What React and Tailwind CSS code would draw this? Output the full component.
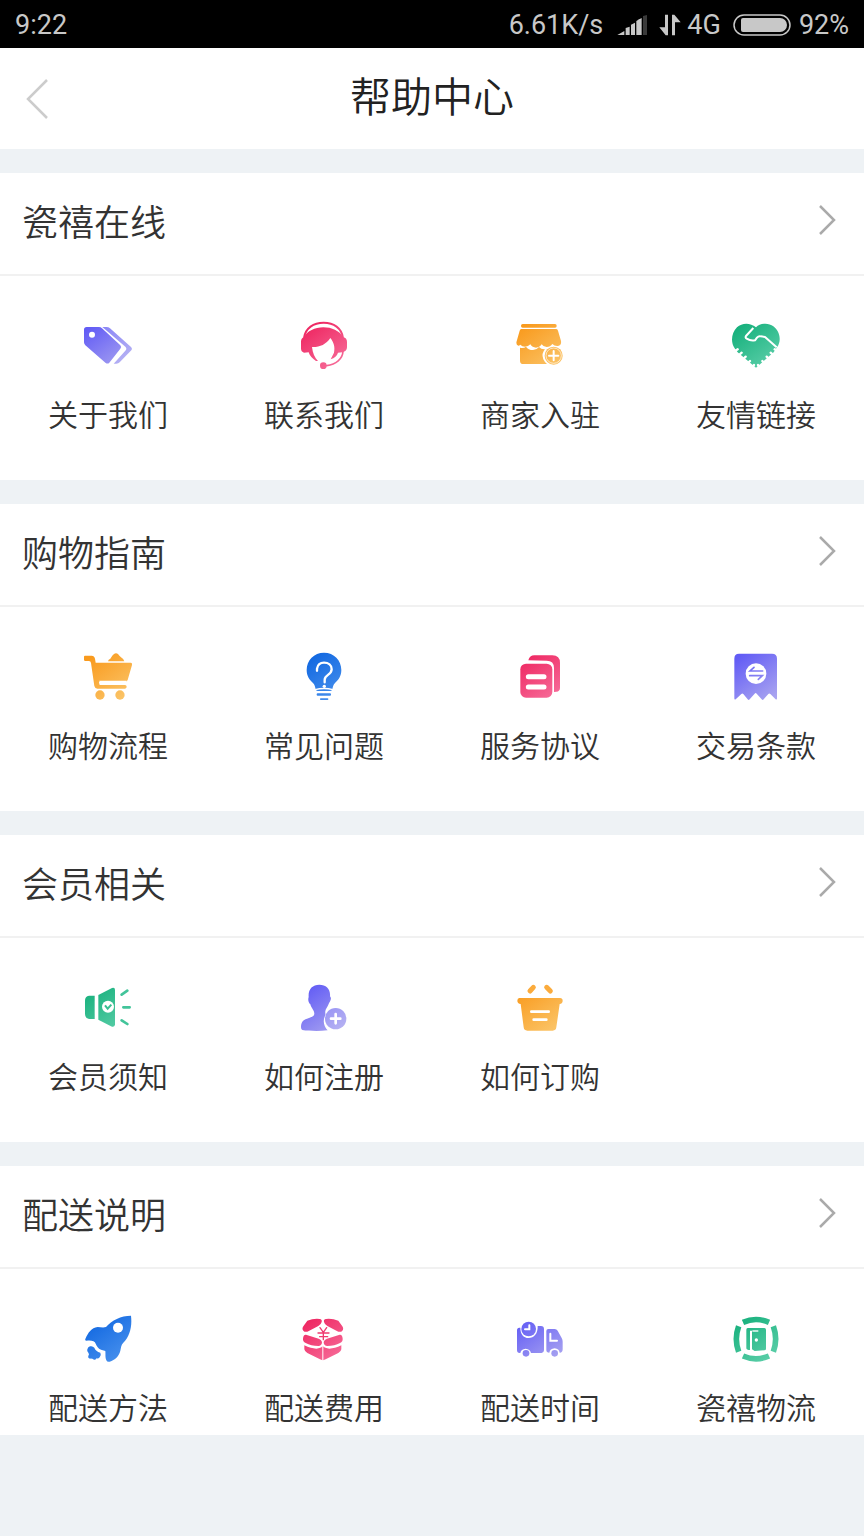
const GRADIENTS = {
  purple: ['#625cf5', '#aaa5f0'],
  red: ['#ee2560', '#f7709c'],
  orange: ['#f99a1d', '#fbc569'],
  green: ['#16b07c', '#5fd0ab'],
  blue: ['#0f66e0', '#4b93ee'],
}

function Glyph({ id, tone, viewBox, children }) {
  const [from, to] = GRADIENTS[tone]
  const [x, y, w, h] = viewBox.split(' ').map(Number)

  return (
    <svg className="size-12" viewBox={viewBox} fill={`url(#${id})`} aria-hidden="true">
      <defs>
        <linearGradient id={id} gradientUnits="userSpaceOnUse" x1={x + 24} y1={y + 12} x2={x + w - 24} y2={y + h}>
          <stop offset="0" stopColor={from} />
          <stop offset="1" stopColor={to} />
        </linearGradient>
      </defs>
      {children}
    </svg>
  )
}

const TagsIcon = () => (
  <Glyph id="g-tags" tone="purple" viewBox="72 33 144 144">
    <path d="M80 51h37q5 0 9 4l55 51q5 5 0 10l-33 42q-5 5-11 1L76 106q-4-4-4-9V59q0-8 8-8z" />
    <path d="M127 51h12q7 0 11 4l63 56q5 5 1 10l-35 36q-4 4-10 4h-8l35-39q6-6 0-12z" opacity=".8" />
    <circle cx="96" cy="74" r="9" fill="#fff" />
  </Glyph>
)

const HeadsetIcon = () => (
  <Glyph id="g-headset" tone="red" viewBox="720 33 144 144">
    <path
      d="M732 84c4-30 29-46 59-46s54 16 58 46"
      fill="none"
      stroke="url(#g-headset)"
      strokeWidth="6"
    />
    <path d="M732 82q-9 2-9 13v20q0 11 9 13l14-1c3 11 11 19 22 26h6c-10-10-16-24-18-42 22 1 42-7 55-27 10 12 15 27 11 44l-10 20c12-4 19-10 22-20l13-1q14-3 14-15V96q0-12-11-14C838 62 815 52 790 52s-49 11-58 30z" />
    <path
      d="M849 124c-1 23-21 39-49 43"
      fill="none"
      stroke="url(#g-headset)"
      strokeWidth="5"
      strokeLinecap="round"
    />
    <circle cx="790" cy="167" r="10" />
  </Glyph>
)

const ShopIcon = () => (
  <Glyph id="g-shop" tone="orange" viewBox="48 33 144 144">
    <rect x="63" y="42" width="107" height="11" rx="5" />
    <path d="M64 57h105q4 0 5 5l9 31q2 13-9 15-10 1-17-6-6 9-17 9-10 0-15-8-7 10-17 10-11 0-17-10-6 7-16 7-9 0-14-6-4 4-6 3-8-3-5-13l9-32q1-5 5-5z" />
    <path d="M60 113q11 3 18-3 7 10 21 10 11 0 18-9 7 8 18 7-12 13-5 30 4 9 11 14H70q-10 0-10-10z" />
    <circle cx="161" cy="137" r="27" />
    <circle cx="161" cy="137" r="23" fill="none" stroke="#fff" strokeWidth="2" />
    <path d="M147 137h28M161 123v28" stroke="#fff" strokeWidth="6" strokeLinecap="round" />
  </Glyph>
)

const HandshakeIcon = () => (
  <Glyph id="g-handshake" tone="green" viewBox="696 33 144 144">
    <path d="M768 52c13-13 38-14 52-3 19 14 26 42 11 63l-10 15-53 46-55-46-9-12c-12-18-11-44 7-63 15-14 39-15 57 0z" />
    <path
      d="M760 54l-22 24q-3 5 2 8 12 8 25 5l6-8q5-6 11-4l13 2 35 31"
      fill="none"
      stroke="#fff"
      strokeWidth="6"
      strokeLinejoin="round"
    />
    <path
      d="M702 125l11-7M714 138l11-10M727 150l10-10M740 163l10-10M754 176l8-11M835 125l-11-7M823 138l-11-10M810 150l-10-10M797 163l-10-10M782 176l-8-11"
      stroke="#fff"
      strokeWidth="7"
      strokeLinecap="round"
    />
  </Glyph>
)

const CartIcon = () => (
  <Glyph id="g-cart" tone="orange" viewBox="72 36 144 144">
    <path d="M75 47h20q8 0 10 9l2 12h105q5 0 4 7l-13 45q-2 5-7 5l-79 1 2 9h76q5 0 5 5t-5 6h-83q-7 0-9-8L93 69q-1-6-6-6H76q-4 0-4-4V50q0-3 3-3z" />
    <path d="M144 64q1-6 7-8 6-10 11-14 6-4 12 0 4 5 9 10 8 4 10 12z" />
    <path d="M118 122h82l-2 9h-79z" fill="#fff" />
    <circle cx="120" cy="165" r="14" />
    <circle cx="180" cy="165" r="14" />
  </Glyph>
)

const BulbIcon = () => (
  <Glyph id="g-bulb" tone="blue" viewBox="720 36 144 144">
    <path d="M792 38c30 0 52 23 52 52 0 18-9 30-19 39-6 6-6 11-8 19q-1 5-6 5h-38q-5 0-6-5c-2-8-2-13-8-19-10-9-19-21-19-39 0-29 22-52 52-52z" />
    <path
      d="M771 92V86c2-11 10-18 21-18 13 0 23 8 23 20 0 17-21 16-21 31v8"
      fill="none"
      stroke="#fff"
      strokeWidth="7"
      strokeLinecap="round"
    />
    <circle cx="793" cy="139" r="5" fill="#fff" />
    <path d="M765 149q27-7 54 0" stroke="#fff" strokeWidth="4" fill="none" />
    <rect x="770" y="160" width="43" height="7" rx="3" />
    <rect x="780" y="175" width="25" height="5" rx="2" />
  </Glyph>
)

const DocumentsIcon = () => (
  <Glyph id="g-docs" tone="red" viewBox="48 36 144 144">
    <path d="M85 61q4-15 18-15h54q23 0 23 23v74q0 11-11 12l-7 1V84q0-22-22-22z" />
    <rect x="61" y="71" width="96" height="102" rx="17" />
    <path d="M85 110h47M85 141h47" stroke="#fff" strokeWidth="15" strokeLinecap="round" />
  </Glyph>
)

const ReceiptIcon = () => (
  <Glyph id="g-receipt" tone="purple" viewBox="696 36 144 144">
    <path d="M717 41h99q15 0 15 15v119q0 6-5 2l-15-15q-3-3-6 0l-14 16q-3 4-6 0l-15-17q-3-4-6 0l-15 17q-3 4-6 0l-13-16q-3-3-6 0l-16 15q-5 4-5-2V56q0-15 14-15z" />
    <circle cx="768" cy="101" r="31" fill="#fff" />
    <path
      d="M788 93h-38l12-11M749 107h38l-12 11"
      fill="none"
      stroke="url(#g-receipt)"
      strokeWidth="5"
      strokeLinecap="round"
    />
  </Glyph>
)

const SpeakerIcon = () => (
  <Glyph id="g-speaker" tone="green" viewBox="72 39 144 144">
    <path d="M87 77h17v70H87q-12-2-12-15V91q0-12 12-14z" />
    <path d="M115 75l41-21q9-3 9 6v103q0 9-9 7l-41-21z" />
    <circle cx="144" cy="110" r="18" fill="#fff" />
    <path d="M135 106l8 10 11-12" fill="none" stroke="url(#g-speaker)" strokeWidth="6" />
    <path
      d="M185 74l17-12M190 112h19M185 151l17 11"
      stroke="#42c49a"
      strokeWidth="8"
      strokeLinecap="round"
    />
  </Glyph>
)

const RegisterIcon = () => (
  <Glyph id="g-register" tone="purple" viewBox="720 39 144 144">
    <path d="M778 44c21 0 34 14 32 35 3 3 4 8 1 13-2 5-4 6-5 10-4 10-9 14-10 22-1 6 2 9-1 14-8 16-2 33 8 43-26 3-56 2-76-1q-4-1-4-8c0-14 5-22 18-26 14-5 22-7 22-15 0-10-9-16-12-28-5-4-8-13-5-22-2-23 11-37 32-37z" />
    <circle cx="827" cy="146" r="32" opacity=".85" />
    <path d="M813 146h28M827 132v28" stroke="#fff" strokeWidth="8" strokeLinecap="round" />
  </Glyph>
)

const BasketIcon = () => (
  <Glyph id="g-basket" tone="orange" viewBox="48 39 144 144">
    <path d="M90 63l10-11M151 63l-11-11" stroke="#fbab3c" strokeWidth="15" strokeLinecap="round" />
    <path d="M58 84h122q8 0 8 8 0 9-9 10l-10 70q-1 10-11 10H82q-10 0-11-10l-9-70q-10-1-10-10 0-8 6-8z" />
    <path d="M94 125h52M101 149h38" stroke="#fff" strokeWidth="8" strokeLinecap="round" />
  </Glyph>
)

const RocketIcon = () => (
  <Glyph id="g-rocket" tone="blue" viewBox="72 27 144 144">
    <path d="M213 32c4 34-4 62-23 81-7 6-7 16-9 24-4 16-16 28-32 33q-7 2-10-4c-4-10-2-18-3-28l-13-4c-9-4-12-10-16-18-2-8-14-11-27-9q-7 0-3-7c7-16 17-32 36-34 8 0 16 3 25 0 17-20 45-34 75-34z" />
    <circle cx="174" cy="68" r="15" fill="#fff" />
    <path d="M90 124q8-2 13 4 4 11 18 15 4 7-2 14-4 5-10 3 0 5-7 4-6-4-12-3-7-1-5-8 4-6 0-10-5-4-3-10 2-7 8-9z" />
  </Glyph>
)

const ParcelIcon = () => (
  <Glyph id="g-parcel" tone="red" viewBox="720 27 144 144">
    <path d="M742 47q18-7 37-5 8 1 6 9-2 8-10 12l-33 17q-8 2-12-3-5-5 0-13zM835 47q-18-7-37-5-8 1-6 9 2 8 10 12l33 17q8 2 12-3 5-5 0-13z" />
    <path d="M738 89l38 12q10 4 10 12-1 8-11 10-22 0-38-9-9-5-8-13 1-13 9-12zM839 89l-38 12q-10 4-10 12 1 8 11 10 22 0 38-9 9-5 8-13-1-13-9-12z" />
    <path d="M733 121q20 10 36 10 14-1 18-7v42q-3-1-7-3l-38-19q-8-4-9-11zM844 121q-20 10-36 10-14-1-18-7v42q3-1 7-3l38-19q8-4 9-11z" />
    <path
      d="M780 68l10 14 10-14M774 84h33M779 95h24M790 83v21"
      fill="none"
      stroke="#ef3a70"
      strokeWidth="4"
      strokeLinecap="round"
    />
  </Glyph>
)

const TruckIcon = () => (
  <Glyph id="g-truck" tone="purple" viewBox="48 27 144 144">
    <path d="M58 68h3c0 19 9 31 25 31 16 0 28-13 27-36h10q9 0 9 9v64q0 7-7 8h-32q-3-12-16-13-14 1-16 13h-2q-8 0-8-9V76q0-8 7-8z" />
    <circle cx="86" cy="72" r="22" />
    <path d="M88 61v12H75" fill="none" stroke="#fff" strokeWidth="6" strokeLinecap="round" />
    <path d="M145 72h19q6 0 9 5l12 22q3 5 3 11v23q0 9-7 10h-2q-2-12-15-13-14 1-16 13-9 0-9-8V78q0-6 6-6z" />
    <path d="M151 86v21h20" fill="none" stroke="#fff" strokeWidth="6" strokeLinecap="round" />
    <circle cx="78" cy="145" r="10" />
    <circle cx="164" cy="145" r="10" />
  </Glyph>
)

const DoorIcon = () => (
  <Glyph id="g-door" tone="green" viewBox="696 27 144 144">
    <path
      d="M729 52q39-17 78 0M729 153q39 17 78 0M716 64q-14 38 0 76M820 64q14 38 0 76"
      fill="none"
      stroke="url(#g-door)"
      strokeWidth="17"
    />
    <path d="M743 69h50q5 0 5 5v57q0 5-5 5l-29 2-8-5V77h-6v58q-11 0-11-6V74q0-5 4-5z" />
    <path d="M757 78h18" stroke="#fff" strokeWidth="4" />
    <circle cx="769" cy="105" r="5" fill="#fff" />
  </Glyph>
)

const SECTIONS = [
  {
    title: '瓷禧在线',
    items: [
      { label: '关于我们', Icon: TagsIcon },
      { label: '联系我们', Icon: HeadsetIcon },
      { label: '商家入驻', Icon: ShopIcon },
      { label: '友情链接', Icon: HandshakeIcon },
    ],
  },
  {
    title: '购物指南',
    items: [
      { label: '购物流程', Icon: CartIcon },
      { label: '常见问题', Icon: BulbIcon },
      { label: '服务协议', Icon: DocumentsIcon },
      { label: '交易条款', Icon: ReceiptIcon },
    ],
  },
  {
    title: '会员相关',
    items: [
      { label: '会员须知', Icon: SpeakerIcon },
      { label: '如何注册', Icon: RegisterIcon },
      { label: '如何订购', Icon: BasketIcon },
    ],
  },
  {
    title: '配送说明',
    items: [
      { label: '配送方法', Icon: RocketIcon },
      { label: '配送费用', Icon: ParcelIcon },
      { label: '配送时间', Icon: TruckIcon },
      { label: '瓷禧物流', Icon: DoorIcon },
    ],
  },
]

function StatusBar() {
  return (
    <div className="flex h-12 items-center justify-between bg-black px-[15px] pt-0.5 font-[Roboto,sans-serif] text-[27px] leading-none font-normal text-[#c8c8c8]">
      <span>9:22</span>
      <div className="flex items-center">
        <span>6.61K/s</span>
        <svg className="ml-3.5 h-5 w-[30px]" viewBox="0 0 90 60" fill="#c8c8c8" aria-hidden="true">
          <path d="M1 60l21-12v12zM26 39l12-4v25H26zM42 29l12-6v37H42zM58 18l12-6v48H58z" />
          <path d="M62 15l12-6v51H62z" />
          <path d="M78 3l12-3v60H78z" fill="#3a3a3a" />
        </svg>
        <svg className="ml-3 h-[22px] w-[22px]" viewBox="0 0 66 66" fill="#c8c8c8" aria-hidden="true">
          <path d="M18 2h9v62h-7L1 40h17zM39 2h7l19 23H48v39h-9z" />
        </svg>
        <span className="ml-1.5">4G</span>
        <svg className="ml-3 h-[22px] w-[58px]" viewBox="0 0 58 22" aria-hidden="true">
          <rect x="1" y="1" width="56" height="20" rx="10" fill="none" stroke="#c8c8c8" strokeWidth="1.5" />
          <path d="M10 4h37a7 7 0 0 1 0 14H10q-2 0-2-2V6q0-2 2-2z" fill="#c8c8c8" />
        </svg>
        <span className="ml-2">92%</span>
      </div>
    </div>
  )
}

function Section({ title, items, last }) {
  return (
    <section className="bg-white">
      <h2>
        <a href="#" className="flex items-center justify-between border-b-2 border-[#f1f1f1] pt-5 pr-7 pb-[27px] pl-[22px]">
          <span className="text-[36px] leading-[54px] text-[#333]">{title}</span>
          <svg className="h-8 w-[18px]" viewBox="0 0 18 32" fill="none" stroke="#aaa" strokeWidth="2.5" aria-hidden="true">
            <path d="M2 2l14 14L2 30" />
          </svg>
        </a>
      </h2>
      <ul className={`grid grid-cols-4 pt-[45px] ${last ? 'pb-[9px]' : 'pb-[47px]'}`}>
        {items.map(({ label, Icon }) => (
          <li key={label}>
            <a href="#" className="flex flex-col items-center gap-6">
              <Icon />
              <span className="text-[30px] leading-10 whitespace-nowrap text-[#333]">{label}</span>
            </a>
          </li>
        ))}
      </ul>
    </section>
  )
}

export default function App() {
  return (
    <div className="min-h-screen bg-[#eef2f5] font-['Noto_Sans_CJK_SC',sans-serif] font-[350]">
      <StatusBar />
      <header className="grid grid-cols-[1fr_auto_1fr] items-start bg-white pt-4 pb-[25px]">
        <button type="button" aria-label="返回" className="ml-[26px] justify-self-start pt-[15px]">
          <svg className="h-10 w-6" viewBox="0 0 24 40" fill="none" stroke="#ccc" strokeWidth="2.5" aria-hidden="true">
            <path d="M21 1L2 20l19 19" />
          </svg>
        </button>
        <h1 className="text-[41px] leading-[60px] text-[#222]">帮助中心</h1>
      </header>
      <main className="flex flex-col gap-6 pt-6">
        {SECTIONS.map((section, index) => (
          <Section key={section.title} {...section} last={index === SECTIONS.length - 1} />
        ))}
      </main>
    </div>
  )
}
